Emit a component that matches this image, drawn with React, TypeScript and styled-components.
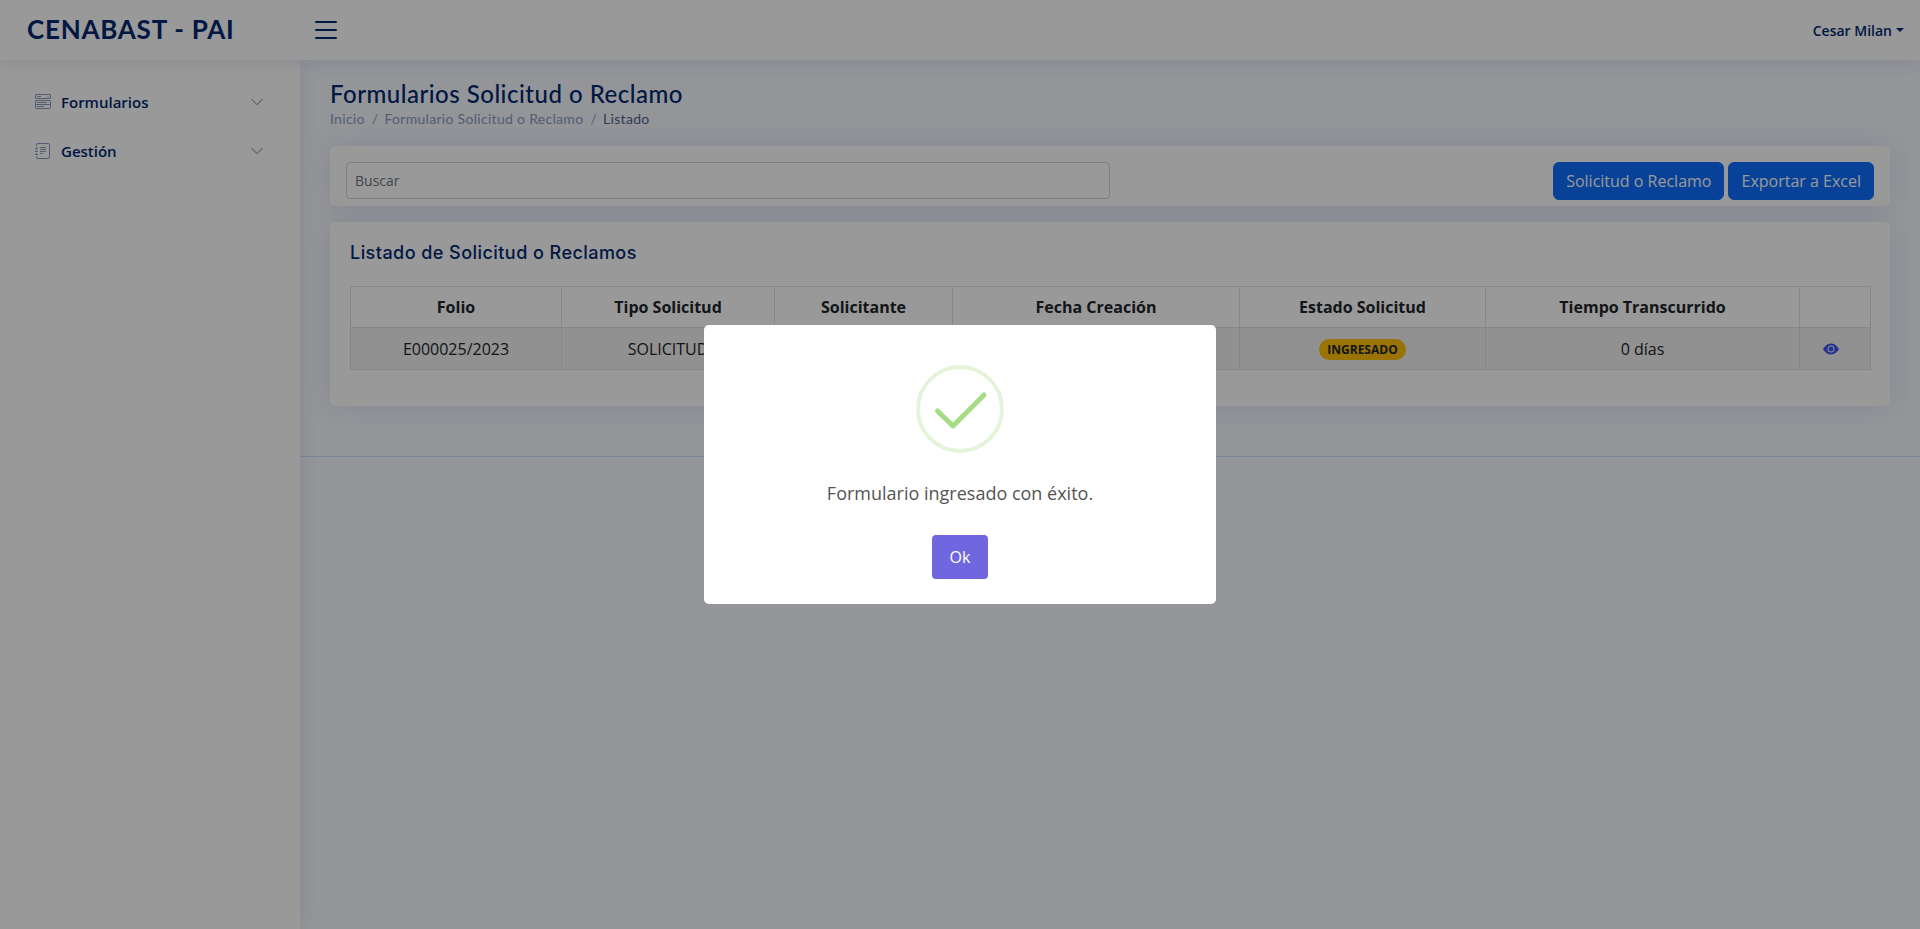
import styled, { createGlobalStyle } from "styled-components";
import { BsChevronDown, BsEyeFill, BsJournalText, BsMenuButtonWide, BsList } from "react-icons/bs";

const GlobalStyle = createGlobalStyle`
  * {
    box-sizing: border-box;
  }

  body {
    margin: 0;
    background: #f6f9ff;
    color: #444444;
    font-family: "Open Sans", sans-serif;
    overflow: hidden;
  }
`;

const headingFont = `"Lato", "Open Sans", sans-serif`;

const Page = styled.div`
  height: 929px;
  display: flex;
  flex-direction: column;
`;

const Header = styled.header`
  height: 60px;
  flex: none;
  display: flex;
  align-items: center;
  padding-left: 27px;
  padding-right: 16px;
  background: #ffffff;
  box-shadow: 0 2px 20px rgba(1, 41, 112, 0.1);
  position: relative;
  z-index: 2;
`;

const Logo = styled.span`
  width: 283px;
  font-family: ${headingFont};
  font-size: 26px;
  font-weight: 700;
  letter-spacing: 0.75px;
  margin-top: -2px;
  color: #012970;
`;

const Toggle = styled(BsList)`
  font-size: 32px;
  color: #012970;
`;

const Profile = styled.a`
  margin-left: auto;
  display: flex;
  align-items: center;
  gap: 4px;
  font-size: 14px;
  font-weight: 600;
  color: #012970;

  &::after {
    content: "";
    border-top: 4px solid #012970;
    border-left: 4px solid transparent;
    border-right: 4px solid transparent;
  }
`;

const Body = styled.div`
  flex: 1;
  display: flex;
`;

const Sidebar = styled.aside`
  width: 300px;
  flex: none;
  padding: 20px;
  display: flex;
  flex-direction: column;
  gap: 6px;
  background: #ffffff;
  box-shadow: 0 0 20px rgba(1, 41, 112, 0.1);
  position: relative;
  z-index: 1;
`;

const NavLink = styled.a`
  height: 43px;
  padding: 0 16px 0 15px;
  display: flex;
  align-items: center;
  font-size: 15px;
  font-weight: 600;
  color: #012970;

  > svg:first-child {
    font-size: 16px;
    margin-right: 10px;
    color: #899bbd;
  }

  > svg:last-child {
    margin-left: auto;
    font-size: 14px;
    color: #899bbd;
  }
`;

const Content = styled.div`
  flex: 1;
  min-width: 0;
  display: flex;
  flex-direction: column;
`;

const Main = styled.main`
  padding: 20px 30px 20px;
  border-bottom: 1px solid #cddfff;
`;

const PageTitle = styled.h1`
  margin: -1px 0 1px;
  font-family: ${headingFont};
  font-size: 24px;
  font-weight: 500;
  letter-spacing: 0.5px;
  line-height: 29px;
  color: #012970;
`;

const Breadcrumb = styled.ol`
  list-style: none;
  margin: -1px 0 17px;
  padding: 0;
  display: flex;
  font-family: ${headingFont};
  font-size: 14px;
  letter-spacing: 0.3px;
  line-height: 21px;
  color: #899bbd;
`;

const Crumb = styled.li<{ $active?: boolean }>`
  color: ${({ $active }) => ($active ? "#51678f" : "#899bbd")};

  &:not(:first-child)::before {
    content: "/";
    padding: 0 6px 0 7px;
    color: #899bbd;
  }
`;

const Card = styled.section`
  background: #ffffff;
  border-radius: 5px;
  box-shadow: 0 0 30px rgba(1, 41, 112, 0.1);
  margin-bottom: 16px;
`;

const Toolbar = styled(Card)`
  height: 60px;
  padding: 16px;
  display: flex;
  justify-content: space-between;
  align-items: flex-start;
`;

const SearchInput = styled.input`
  width: 764px;
  height: 37px;
  padding: 6px 8px;
  border: 1px solid #ced4da;
  border-radius: 4px;
  font-family: "Open Sans", sans-serif;
  font-size: 14px;
  color: #212529;

  &::placeholder {
    color: #6c757d;
  }
`;

const Actions = styled.div`
  display: flex;
  gap: 4px;
`;

const PrimaryButton = styled.button`
  height: 38px;
  padding: 0 12px;
  border: 1px solid #0d6efd;
  border-radius: 6px;
  background: #0d6efd;
  color: #ffffff;
  font-family: "Open Sans", sans-serif;
  font-size: 16px;
`;

const ListCard = styled(Card)`
  height: 184px;
  margin-bottom: 30px;
  padding: 0 20px;
`;

const CardTitle = styled.h5`
  margin: 0;
  padding: 16px 0 19px;
  font-family: "Inter", sans-serif;
  font-size: 18px;
  font-weight: 500;
  letter-spacing: 0.45px;
  line-height: 29px;
  color: #012970;
`;

const Table = styled.table`
  width: 100%;
  table-layout: fixed;
  border-collapse: collapse;
  color: #212529;
  font-size: 16px;
  text-align: center;
`;

const Th = styled.th<{ $width: number }>`
  width: ${({ $width }) => $width}px;
  height: 41px;
  padding: 0 8px;
  border: 1px solid #dee2e6;
  font-weight: 700;
`;

const Row = styled.tr`
  background: rgba(0, 0, 0, 0.05);
`;

const Td = styled.td`
  height: 42px;
  padding: 0 8px;
  border: 1px solid #dee2e6;
`;

const Badge = styled.span`
  display: inline-block;
  padding: 4px 8px;
  border-radius: 999px;
  background: #ffc107;
  color: #212529;
  font-size: 12px;
  font-weight: 700;
  line-height: 13px;
  vertical-align: middle;
`;

const ViewIcon = styled(BsEyeFill)`
  display: block;
  margin-left: 15px;
  font-size: 16px;
  color: #4154f1;
`;

const Backdrop = styled.div`
  position: fixed;
  inset: 0;
  z-index: 10;
  background: rgba(0, 0, 0, 0.4);
  display: flex;
  justify-content: center;
  padding-top: 325px;
`;

const Dialog = styled.div`
  width: 512px;
  height: 279px;
  padding-top: 40px;
  border-radius: 5px;
  background: #ffffff;
  display: flex;
  flex-direction: column;
  align-items: center;
`;

const SuccessIcon = styled.svg`
  display: block;
  width: 88px;
  height: 88px;
`;

const Message = styled.p`
  margin: 27px 0 0;
  font-size: 18px;
  line-height: 27px;
  color: #545454;
`;

const OkButton = styled.button`
  width: 56px;
  height: 44px;
  margin-top: 28px;
  border: 0;
  border-radius: 4px;
  background: #7066e0;
  color: #ffffff;
  font-family: "Open Sans", sans-serif;
  font-size: 16px;
`;

const columns = [
  { label: "Folio", width: 211 },
  { label: "Tipo Solicitud", width: 213 },
  { label: "Solicitante", width: 178 },
  { label: "Fecha Creación", width: 287 },
  { label: "Estado Solicitud", width: 246 },
  { label: "Tiempo Transcurrido", width: 314 },
  { label: "", width: 71 },
];

const App = () => {
  return (
    <>
      <GlobalStyle />
      <Page>
        <Header>
          <Logo>CENABAST - PAI</Logo>
          <Toggle />
          <Profile>Cesar Milan</Profile>
        </Header>
        <Body>
          <Sidebar>
            <NavLink>
              <BsMenuButtonWide />
              Formularios
              <BsChevronDown />
            </NavLink>
            <NavLink>
              <BsJournalText />
              Gestión
              <BsChevronDown />
            </NavLink>
          </Sidebar>
          <Content>
            <Main>
              <PageTitle>Formularios Solicitud o Reclamo</PageTitle>
              <Breadcrumb>
                <Crumb>Inicio</Crumb>
                <Crumb>Formulario Solicitud o Reclamo</Crumb>
                <Crumb $active>Listado</Crumb>
              </Breadcrumb>
              <Toolbar>
                <SearchInput placeholder="Buscar" />
                <Actions>
                  <PrimaryButton>Solicitud o Reclamo</PrimaryButton>
                  <PrimaryButton>Exportar a Excel</PrimaryButton>
                </Actions>
              </Toolbar>
              <ListCard>
                <CardTitle>Listado de Solicitud o Reclamos</CardTitle>
                <Table>
                  <thead>
                    <tr>
                      {columns.map((col) => (
                        <Th key={col.label} $width={col.width}>
                          {col.label}
                        </Th>
                      ))}
                    </tr>
                  </thead>
                  <tbody>
                    <Row>
                      <Td>E000025/2023</Td>
                      <Td>SOLICITUD</Td>
                      <Td>Cesar Milan</Td>
                      <Td>29-08-2023</Td>
                      <Td>
                        <Badge>INGRESADO</Badge>
                      </Td>
                      <Td>0 días</Td>
                      <Td>
                        <ViewIcon />
                      </Td>
                    </Row>
                  </tbody>
                </Table>
              </ListCard>
            </Main>
          </Content>
        </Body>
      </Page>
      <Backdrop>
        <Dialog>
          <SuccessIcon viewBox="0 0 88 88">
            <circle cx="44" cy="44" r="42" fill="none" stroke="rgba(165,220,134,0.3)" strokeWidth="4" />
            <path d="M21.5 46 L37 61 L68 30" fill="none" stroke="#a5dc86" strokeWidth="5" strokeLinecap="round" strokeLinejoin="round" />
          </SuccessIcon>
          <Message>Formulario ingresado con éxito.</Message>
          <OkButton>Ok</OkButton>
        </Dialog>
      </Backdrop>
    </>
  );
};

export default App;
